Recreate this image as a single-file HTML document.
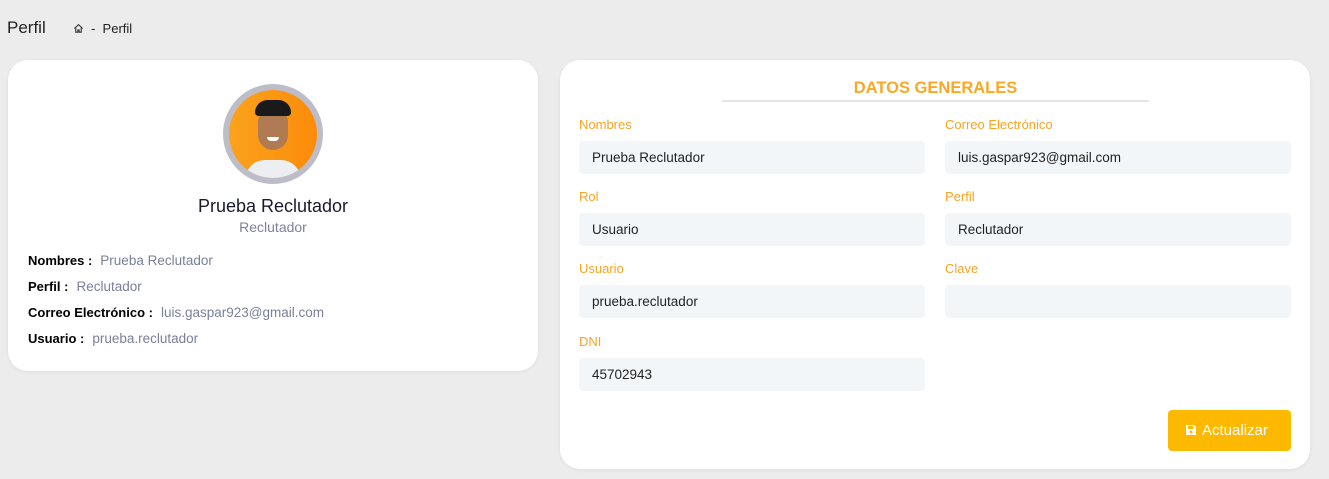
<!DOCTYPE html>
<html><head><meta charset="utf-8"><style>
*{box-sizing:border-box;margin:0;padding:0}
body{width:1329px;height:479px;background:#ececec;font-family:"Liberation Sans",sans-serif;position:relative;overflow:hidden;color:#1a1a2e}
.abs{position:absolute}
.card{position:absolute;background:#fff;border-radius:20px;box-shadow:0 1px 4px rgba(0,0,0,.06)}
.lbl{position:absolute;font-size:13px;color:#f5a524}
.inp{position:absolute;height:33px;width:346px;background:#f3f6f9;border-radius:4px;font-size:13.5px;padding-left:13px;line-height:33px;color:#222}
.row{position:absolute;left:20px;font-size:13.5px;color:#7a7f9a}
.row b{color:#000;font-size:13px;margin-right:8px}
</style></head><body>
<div class="abs" style="left:7px;top:18px;font-size:17px;color:#222">Perfil</div>
<svg class="abs" style="left:73px;top:23px" width="11" height="11" viewBox="0 0 12 12"><path d="M1.5 6L6 1.8 10.5 6M3 5v5h2.3V7.5h1.4V10H9V5" fill="none" stroke="#333" stroke-width="1.2"/></svg>
<div class="abs" style="left:91px;top:21px;font-size:13px;color:#222">-&nbsp;&nbsp;Perfil</div>

<div class="card" style="left:8px;top:60px;width:530px;height:311px">
  <div class="abs" style="left:215px;top:24px;width:100px;height:100px;border-radius:50%;background:#bdbdc9;padding:6px">
    <div style="width:88px;height:88px;border-radius:50%;background:linear-gradient(90deg,#fba21c,#fb8c0a);overflow:hidden;position:relative">
      <div class="abs" style="left:16px;top:70px;width:56px;height:30px;background:#eceef2;border-radius:20px 20px 0 0"></div>
      <div class="abs" style="left:29px;top:20px;width:30px;height:40px;background:#b07a52;border-radius:12px 12px 15px 15px"></div>
      <div class="abs" style="left:26px;top:10px;width:36px;height:16px;background:#1a1a1a;border-radius:14px 14px 4px 4px"></div>
      <div class="abs" style="left:38px;top:47px;width:12px;height:4px;background:#fff;border-radius:0 0 6px 6px"></div>
    </div>
  </div>
  <div class="abs" style="left:0;width:530px;top:136px;text-align:center;font-size:18px;color:#1a1a2e">Prueba Reclutador</div>
  <div class="abs" style="left:0;width:530px;top:159px;text-align:center;font-size:14px;color:#80809a">Reclutador</div>
  <div class="row" style="top:193px"><b>Nombres :</b>Prueba Reclutador</div>
  <div class="row" style="top:219px"><b>Perfil :</b>Reclutador</div>
  <div class="row" style="top:245px"><b>Correo Electrónico :</b>luis.gaspar923@gmail.com</div>
  <div class="row" style="top:271px"><b>Usuario :</b>prueba.reclutador</div>
</div>

<div class="card" style="left:560px;top:60px;width:750px;height:409px"></div>
<div class="abs" style="left:722px;width:427px;top:79px;text-align:center;font-size:16.5px;font-weight:bold;color:#f9a825">DATOS GENERALES</div>
<div class="abs" style="left:722px;top:100px;width:427px;height:2px;background:#e6e6e6"></div>

<div class="lbl" style="left:579px;top:117px">Nombres</div>
<div class="inp" style="left:579px;top:141px">Prueba Reclutador</div>
<div class="lbl" style="left:945px;top:117px">Correo Electrónico</div>
<div class="inp" style="left:945px;top:141px">luis.gaspar923@gmail.com</div>
<div class="lbl" style="left:579px;top:189px">Rol</div>
<div class="inp" style="left:579px;top:213px">Usuario</div>
<div class="lbl" style="left:945px;top:189px">Perfil</div>
<div class="inp" style="left:945px;top:213px">Reclutador</div>
<div class="lbl" style="left:579px;top:261px">Usuario</div>
<div class="inp" style="left:579px;top:285px">prueba.reclutador</div>
<div class="lbl" style="left:945px;top:261px">Clave</div>
<div class="inp" style="left:945px;top:285px"></div>
<div class="lbl" style="left:579px;top:334px">DNI</div>
<div class="inp" style="left:579px;top:358px">45702943</div>

<div class="abs" style="left:1168px;top:410px;width:123px;height:41px;background:#fdb900;border-radius:4px;color:#fff;font-size:15px;line-height:41px;padding-left:17px">
<svg style="vertical-align:-1px;margin-right:5px" width="12" height="12" viewBox="0 0 12 12"><path d="M1 1h8l2 2v8H1z" fill="#fff"/><rect x="3" y="2" width="5" height="3" fill="#fdb900"/><circle cx="6" cy="8" r="1.5" fill="#fdb900"/></svg>Actualizar</div>
</body></html>
